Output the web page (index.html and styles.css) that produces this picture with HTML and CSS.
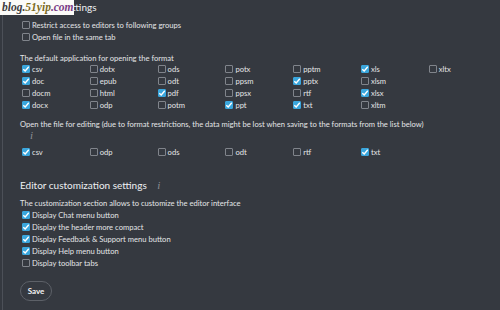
FILE: index.html
```html
<!DOCTYPE html>
<html lang="en">

<head>
    <meta charset="UTF-8">
    <title>ONLYOFFICE settings</title>
    <link rel="stylesheet" href="styles.css">
</head>

<body>
    <!-- Site watermark -->
    <div class="watermark"><span class="wm-a">blog.</span><span class="wm-b">51yip</span><span class="wm-c">.com</span></div>

    <div class="panel">
        <!-- Common settings -->
        <h2 class="section-title">Common settings</h2>
        <div class="check"><span class="box"></span>Restrict access to editors to following groups</div>
        <div class="check"><span class="box"></span>Open file in the same tab</div>

        <p class="caption">The default application for opening the format</p>
        <div class="format-grid">
            <div class="check"><span class="box on"></span>csv</div>
            <div class="check"><span class="box on"></span>doc</div>
            <div class="check"><span class="box"></span>docm</div>
            <div class="check"><span class="box on"></span>docx</div>
            <div class="check"><span class="box"></span>dotx</div>
            <div class="check"><span class="box"></span>epub</div>
            <div class="check"><span class="box"></span>html</div>
            <div class="check"><span class="box"></span>odp</div>
            <div class="check"><span class="box"></span>ods</div>
            <div class="check"><span class="box"></span>odt</div>
            <div class="check"><span class="box on"></span>pdf</div>
            <div class="check"><span class="box"></span>potm</div>
            <div class="check"><span class="box"></span>potx</div>
            <div class="check"><span class="box"></span>ppsm</div>
            <div class="check"><span class="box"></span>ppsx</div>
            <div class="check"><span class="box on"></span>ppt</div>
            <div class="check"><span class="box"></span>pptm</div>
            <div class="check"><span class="box on"></span>pptx</div>
            <div class="check"><span class="box"></span>rtf</div>
            <div class="check"><span class="box on"></span>txt</div>
            <div class="check"><span class="box on"></span>xls</div>
            <div class="check"><span class="box"></span>xlsm</div>
            <div class="check"><span class="box on"></span>xlsx</div>
            <div class="check"><span class="box"></span>xltm</div>
            <div class="check"><span class="box"></span>xltx</div>
        </div>

        <p class="caption edit-caption">Open the file for editing (due to format restrictions, the data might be lost when saving to the formats from the list below)</p>
        <div class="info info-row">i</div>
        <div class="edit-row">
            <div class="check"><span class="box on"></span>csv</div>
            <div class="check"><span class="box"></span>odp</div>
            <div class="check"><span class="box"></span>ods</div>
            <div class="check"><span class="box"></span>odt</div>
            <div class="check"><span class="box"></span>rtf</div>
            <div class="check"><span class="box on"></span>txt</div>
        </div>

        <!-- Editor customization -->
        <h2 class="section-title custom-title">Editor customization settings <span class="info">i</span></h2>
        <p class="caption custom-caption">The customization section allows to customize the editor interface</p>
        <div class="check"><span class="box on"></span>Display Chat menu button</div>
        <div class="check"><span class="box on"></span>Display the header more compact</div>
        <div class="check"><span class="box on"></span>Display Feedback &amp; Support menu button</div>
        <div class="check"><span class="box on"></span>Display Help menu button</div>
        <div class="check"><span class="box"></span>Display toolbar tabs</div>

        <button class="save-btn">Save</button>
    </div>
</body>

</html>
```

FILE: styles.css
```css
body {
    margin: 0;
    background-color: #353940;
    font-family: 'Lato', 'Liberation Sans', sans-serif;
    color: #e4e5e7;
    height: 310px;
    overflow: hidden;
}

/* Watermark over the top left corner */
.watermark {
    position: absolute;
    top: 0;
    left: 0;
    z-index: 5;
    width: 74px;
    height: 15px;
    background-color: #fbfbf8;
    font-family: 'Liberation Serif', serif;
    font-style: italic;
    font-weight: bold;
    font-size: 11.5px;
    line-height: 14px;
    padding-left: 2px;
    box-sizing: border-box;
    white-space: nowrap;
}

.wm-a {
    color: #3b3b40;
}

.wm-b {
    color: #7d6b1e;
}

.wm-c {
    color: #7a3d86;
}

.panel {
    margin-left: 2px;
    border-left: 1px solid #4c5058;
    padding-left: 17px;
    height: 310px;
    box-sizing: border-box;
}

.section-title {
    margin: 0;
    font-size: 10px;
    font-weight: normal;
    line-height: 14px;
    color: #eef0f2;
}

.custom-title {
    margin-top: 20px;
}

.caption {
    margin: 0;
    font-size: 7.6px;
    line-height: 10px;
}

.check {
    display: flex;
    align-items: center;
    height: 12px;
    padding-left: 2px;
    font-size: 7.6px;
    white-space: nowrap;
}

.panel > .check:nth-of-type(1) {
    margin-top: 5px;
}

.box {
    width: 6px;
    height: 6px;
    border: 1px solid #80848b;
    border-radius: 1px;
    margin-right: 2px;
    flex-shrink: 0;
}

.box.on {
    border-color: #3aa6dc;
    background: #3aa6dc url("data:image/svg+xml,%3Csvg xmlns='http://www.w3.org/2000/svg' viewBox='0 0 8 8'%3E%3Cpath d='M1.3 4.2 3.2 6 6.8 1.8' fill='none' stroke='white' stroke-width='1.4'/%3E%3C/svg%3E") center / 8px 8px no-repeat;
}

/* Format table: 4 rows, filled column by column */
.format-grid {
    display: grid;
    grid-template-columns: repeat(7, 67.8px);
    grid-template-rows: repeat(4, 12px);
    grid-auto-flow: column;
}

.caption:first-of-type {
    margin-top: 10px;
}

.edit-caption {
    margin-top: 8px;
}

.info {
    font-family: 'Liberation Serif', serif;
    font-style: italic;
    font-size: 11px;
    color: #8d9096;
}

.info-row {
    height: 12px;
    line-height: 12px;
    padding-left: 10px;
}

.edit-row {
    display: grid;
    grid-template-columns: repeat(7, 67.8px);
    margin-top: 5px;
}

.custom-title .info {
    margin-left: 8px;
}

.custom-caption {
    margin-top: 6px;
    margin-bottom: 1px;
}

.save-btn {
    display: block;
    margin-top: 12px;
    width: 32px;
    height: 20px;
    border: 1px solid #5d6168;
    border-radius: 10px;
    background-color: #353940;
    color: #f4f4f4;
    font-family: 'Lato', 'Liberation Sans', sans-serif;
    font-weight: bold;
    font-size: 8px;
    padding: 0;
}
```
